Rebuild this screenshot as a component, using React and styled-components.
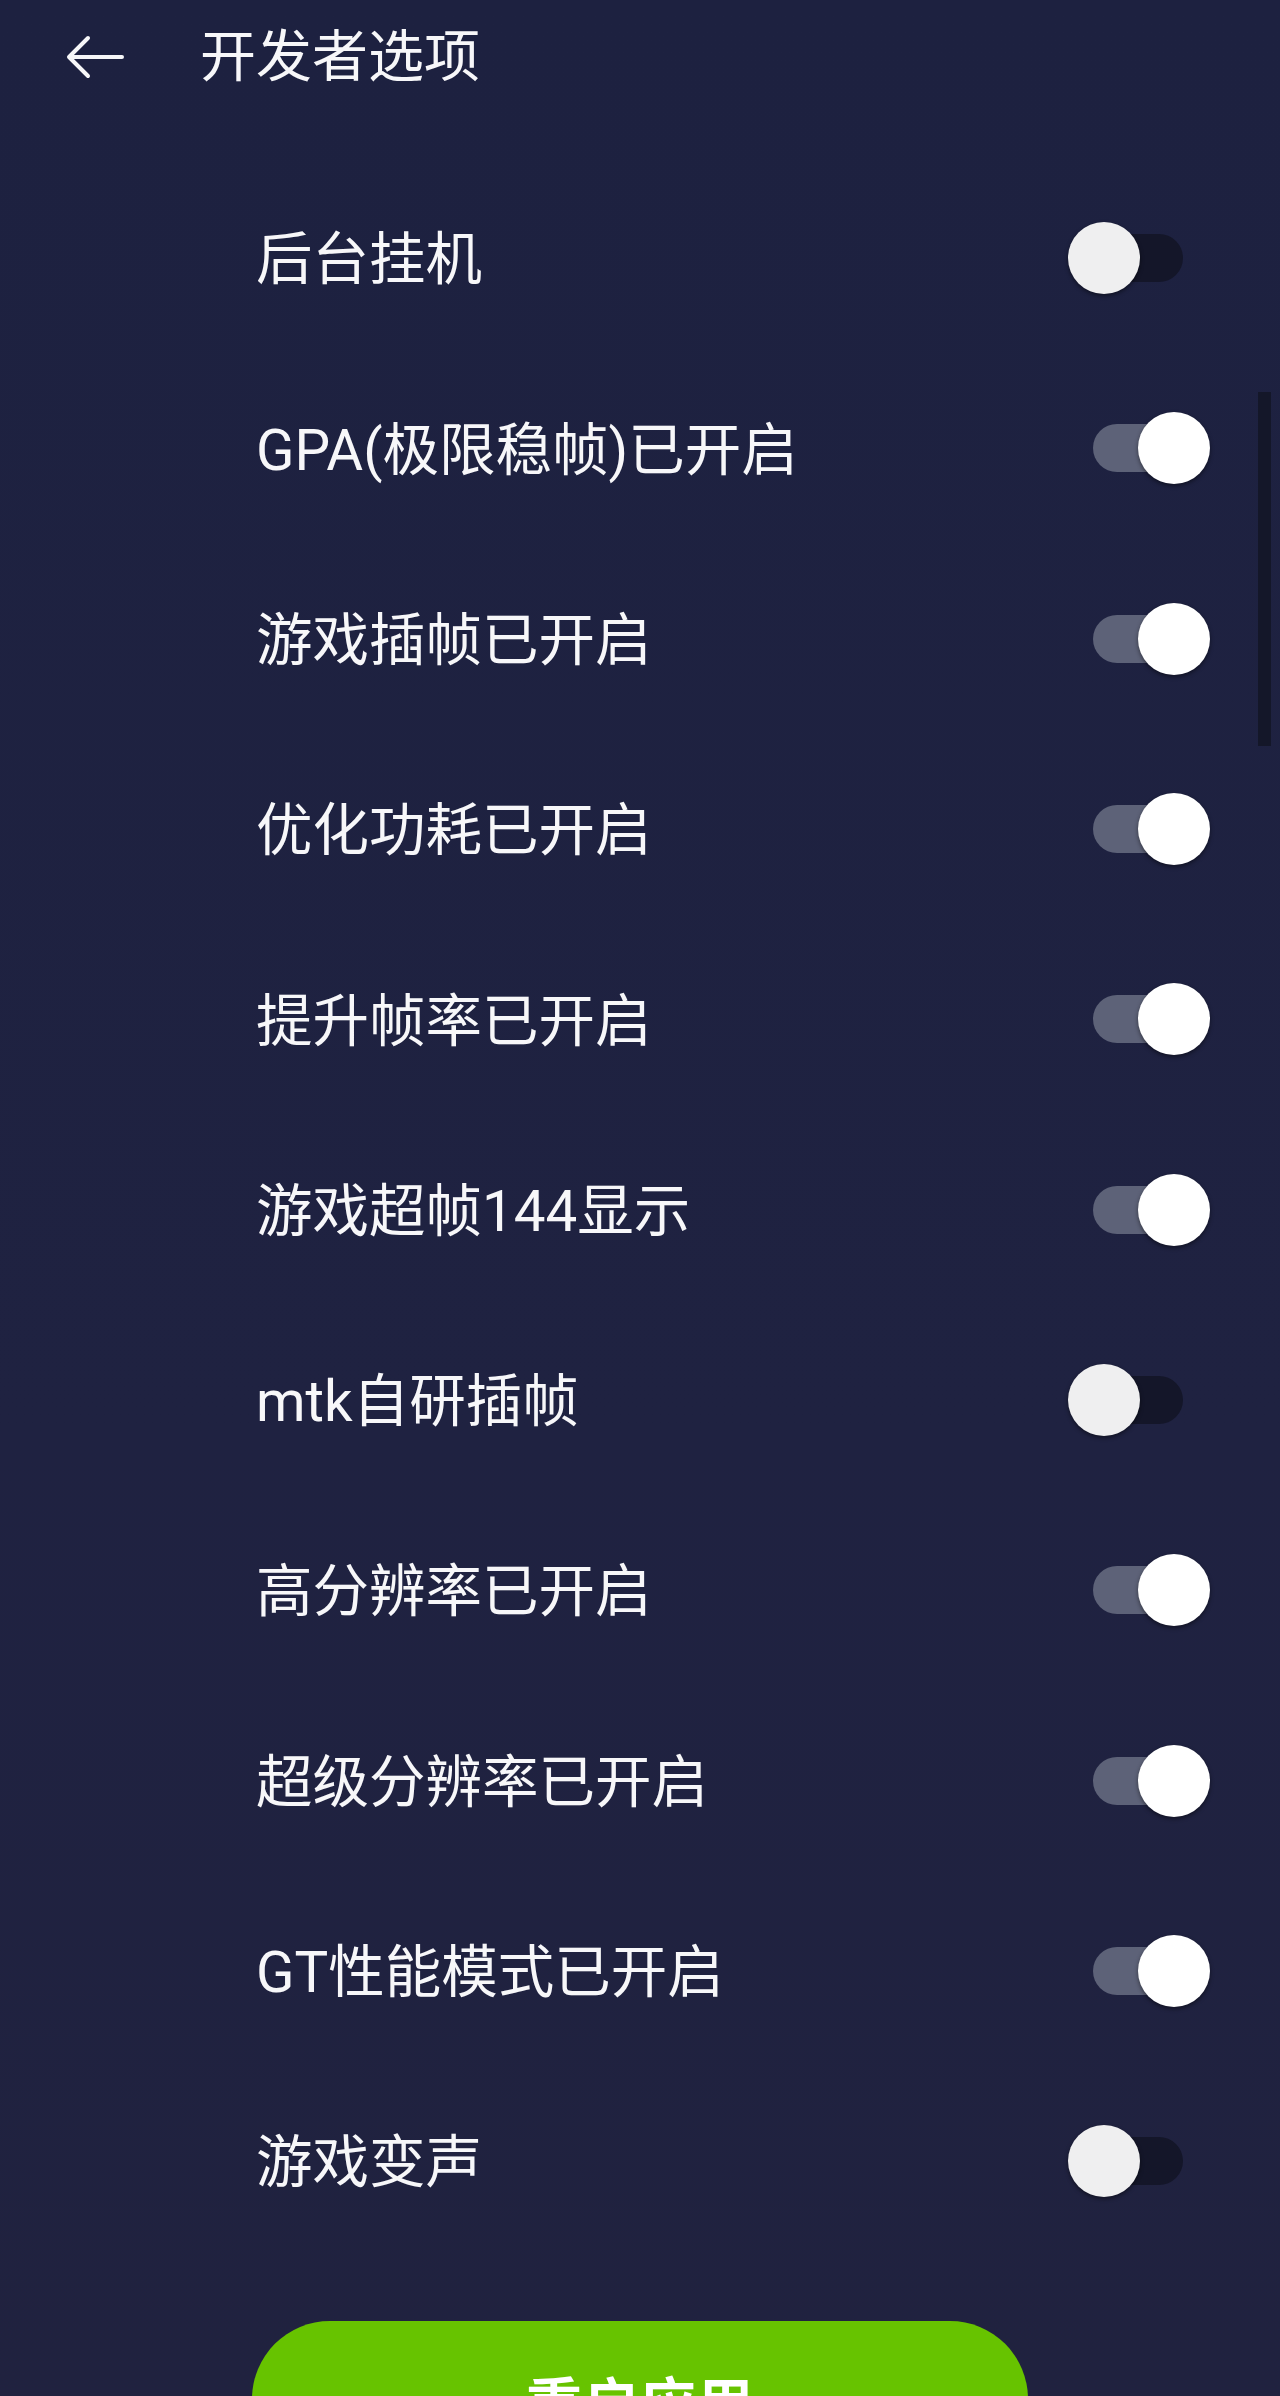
import styled, { createGlobalStyle } from "styled-components";

const GlobalStyle = createGlobalStyle`
    html, body {
        margin: 0;
        padding: 0;
        background-color: #1e2240;
    }
    * {
        box-sizing: border-box;
    }
`;

const Page = styled.div`
    position: relative;
    width: 1280px;
    height: 2396px;
    overflow: hidden;
    background: linear-gradient(180deg, #1d2140 0%, #1f2241 60%, #20223f 100%);
    font-family: Roboto, "Noto Sans CJK SC", sans-serif;
    color: #f7f7f9;
`;

const Header = styled.div`
    height: 114px;
    display: flex;
    align-items: center;
    padding-left: 66px;
`;

const BackButton = styled.div`
    width: 58px;
    height: 44px;
    display: flex;
    align-items: center;
`;

const Title = styled.div`
    margin-left: 76px;
    font-size: 56px;
    line-height: 1;
`;

const List = styled.div`
    padding-top: 49px;
    display: flex;
    flex-direction: column;
`;

const Row = styled.div`
    height: 190.3px;
    display: flex;
    align-items: center;
    justify-content: space-between;
    padding-left: 256px;
    padding-right: 70px;
`;

const Label = styled.div`
    font-size: 56.5px;
    line-height: 1;
    padding-top: 5px;
`;

const Switch = styled.div`
    position: relative;
    width: 142px;
    height: 72px;
`;

const Track = styled.div`
    position: absolute;
    top: 12px;
    left: ${(p) => (p.$on ? "25px" : "15px")};
    width: 100px;
    height: 48px;
    border-radius: 24px;
    background-color: ${(p) => (p.$on ? "#5d6278" : "#141629")};
`;

const Knob = styled.div`
    position: absolute;
    top: 0;
    left: ${(p) => (p.$on ? "70px" : "0px")};
    width: 72px;
    height: 72px;
    border-radius: 50%;
    background-color: ${(p) => (p.$on ? "#ffffff" : "#efeff0")};
    box-shadow: 0 2px 4px rgba(0, 0, 0, 0.45);
`;

const Scrollbar = styled.div`
    position: absolute;
    top: 392px;
    left: 1258px;
    width: 13px;
    height: 354px;
    background-color: #141729;
`;

const Footer = styled.div`
    display: flex;
    justify-content: center;
    padding-top: 65px;
`;

const RestartButton = styled.div`
    width: 776px;
    height: 156px;
    border-radius: 78px;
    background-color: #67c300;
    display: flex;
    align-items: center;
    justify-content: center;
    font-size: 56px;
    font-weight: 700;
    color: #ffffff;
    letter-spacing: 1px;
`;

const options = [
  { label: "后台挂机", on: false },
  { label: "GPA(极限稳帧)已开启", on: true },
  { label: "游戏插帧已开启", on: true },
  { label: "优化功耗已开启", on: true },
  { label: "提升帧率已开启", on: true },
  { label: "游戏超帧144显示", on: true },
  { label: "mtk自研插帧", on: false },
  { label: "高分辨率已开启", on: true },
  { label: "超级分辨率已开启", on: true },
  { label: "GT性能模式已开启", on: true },
  { label: "游戏变声", on: false },
];

const Toggle = ({ on }) => (
  <Switch>
    <Track $on={on} />
    <Knob $on={on} />
  </Switch>
);

const App = () => {
  return (
    <Page>
      <GlobalStyle />
      <Header>
        <BackButton>
          <svg width="58" height="44" viewBox="0 0 58 44" fill="none">
            <path
              d="M56 22H4M22 3L3 22L22 41"
              stroke="#f7f7f9"
              strokeWidth="4"
              strokeLinecap="round"
              strokeLinejoin="round"
            />
          </svg>
        </BackButton>
        <Title>开发者选项</Title>
      </Header>
      <List>
        {options.map((o) => (
          <Row key={o.label}>
            <Label>{o.label}</Label>
            <Toggle on={o.on} />
          </Row>
        ))}
      </List>
      <Footer>
        <RestartButton>重启应用</RestartButton>
      </Footer>
      <Scrollbar />
    </Page>
  );
};

export default App;
